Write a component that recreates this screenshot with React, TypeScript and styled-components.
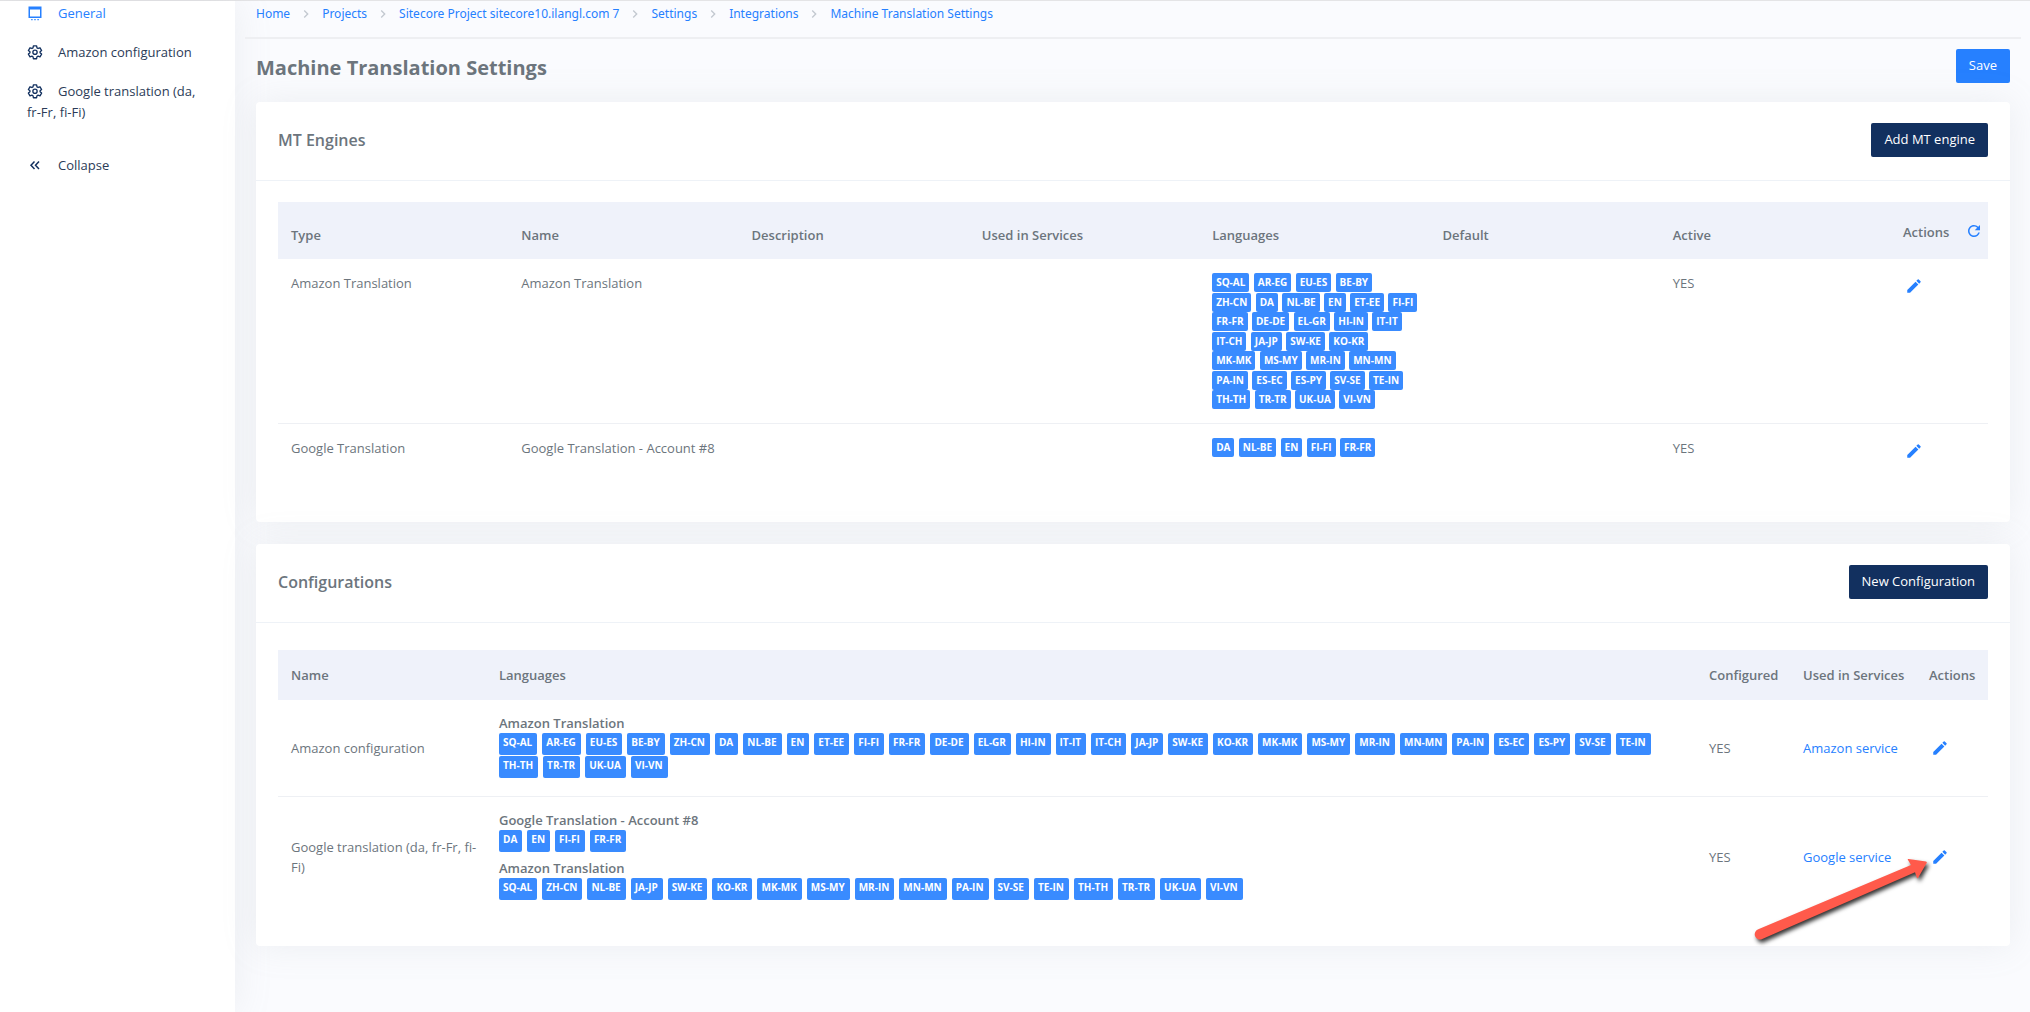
import React from 'react';
import styled, { createGlobalStyle } from 'styled-components';
import { MdEdit, MdRefresh, MdChevronRight } from 'react-icons/md';

const GlobalStyle = createGlobalStyle`
  *, *::before, *::after { box-sizing: border-box; }
  body {
    margin: 0;
    background: #fafbfe;
    color: #6c757d;
    font-family: "Open Sans", "Noto Sans", sans-serif;
    font-size: 13px;
    line-height: 1.5;
  }
  a { color: #2680ff; text-decoration: none; }
  h1, h2, p, ul, ol { margin: 0; padding: 0; }
  ul, ol { list-style: none; }
`;

const Page = styled.div`
  display: grid;
  grid-template-columns: 235px minmax(0, 1fr);
  min-height: 100vh;
  border-top: 1px solid #e4e4e6;
`;

const Sidebar = styled.nav`
  background: #fff;
  box-shadow: 0 0 35px 0 rgba(154, 161, 171, 0.15);
  padding: 2px 27px;
`;

const NavList = styled.ul`
  display: flex;
  flex-direction: column;
  gap: 18px;
`;

const NavItem = styled.li<{ $spaced?: boolean }>`
  margin-top: ${(p) => (p.$spaced ? 14 : 0)}px;
`;

const NavLink = styled.a<{ $active?: boolean }>`
  display: block;
  font-size: 13px;
  line-height: 21px;
  color: ${(p) => (p.$active ? '#2680ff' : '#2b3b57')};

  svg {
    width: 16px;
    height: 16px;
    margin-right: 15px;
    vertical-align: -3px;
    color: ${(p) => (p.$active ? '#2680ff' : '#12305f')};
  }
`;

const CollapseButton = styled(NavLink).attrs({ as: 'button', type: 'button' })`
  border: 0;
  padding: 0;
  background: none;
  font-family: inherit;
  cursor: pointer;
`;

const Main = styled.main`
  padding: 0 9px 24px 10px;
`;

const Crumbs = styled.ol`
  display: flex;
  align-items: center;
  height: 38px;
  padding: 0 11px 10px;
  border-bottom: 2px solid #eeeff2;
  font-family: "Noto Sans", "Open Sans", sans-serif;
  font-size: 12px;
`;

const Crumb = styled.li`
  display: flex;
  align-items: center;

  svg {
    width: 16px;
    height: 16px;
    margin: 0 8px;
    color: #c3c9d0;
  }
`;

const Content = styled.div`
  display: flex;
  flex-direction: column;
  gap: 22px;
  padding: 10px 11px 0;
`;

const TitleBar = styled.div`
  display: flex;
  align-items: flex-start;
  justify-content: space-between;
  height: 31px;
`;

const Title = styled.h1`
  padding-top: 4px;
  font-size: 20px;
  font-weight: 700;
  line-height: 30px;
`;

const Button = styled.button<{ $dark?: boolean }>`
  height: 34px;
  padding: 0 13px;
  border: 0;
  border-radius: 2px;
  background: ${(p) => (p.$dark ? '#12305f' : '#2680ff')};
  color: #fff;
  font: inherit;
  cursor: pointer;
`;

const Card = styled.section`
  background: #fff;
  border-radius: 4px;
  box-shadow: 0 0 35px 0 rgba(154, 161, 171, 0.15);
`;

const CardHead = styled.header`
  display: flex;
  align-items: center;
  justify-content: space-between;
  height: 79px;
  padding: 0 22px 2px;
  border-bottom: 1px solid #eef2f7;
`;

const CardTitle = styled.h2`
  font-size: 16px;
  font-weight: 600;
`;

const CardBody = styled.div<{ $top: number; $bottom: number }>`
  padding: ${(p) => p.$top}px 22px ${(p) => p.$bottom}px;
`;

const Table = styled.table`
  width: 100%;
  border-collapse: collapse;
  table-layout: fixed;
  line-height: 20px;
`;

const Col = styled.col<{ $width?: number }>`
  width: ${(p) => (p.$width ? `${p.$width}px` : 'auto')};
`;

const Th = styled.th<{ $height: number }>`
  height: ${(p) => p.$height}px;
  padding: 0 13px;
  background: #eff2fa;
  text-align: left;
  font-weight: 600;
  white-space: nowrap;
`;

const EngineTh = styled(Th)`
  padding-top: 8px;
`;

const Td = styled.td`
  padding: 14px 4px 13px 13px;
  border-bottom: 1px solid #eef0f4;
  vertical-align: top;

  tr:last-child > & { border-bottom: 0; }
`;

const ConfigTd = styled(Td)`
  padding-top: 16px;
  padding-bottom: 16px;
  vertical-align: middle;
`;

const LanguagesTd = styled(Td)`
  padding-bottom: 18px;
  padding-top: 13px;
`;

const ActionsHead = styled.div`
  display: flex;
  align-items: flex-start;
  justify-content: space-between;
  margin-right: -8px;
  padding-top: 2px;
`;

const IconButton = styled.button`
  display: block;
  padding: 0;
  border: 0;
  background: none;
  color: #2680ff;
  line-height: 0;
  cursor: pointer;

  svg { width: 18px; height: 18px; }
`;

const EditButton = styled(IconButton)`
  margin: 4px 2px;
`;

const TagLine = styled.div`
  line-height: 1.5;
`;

const Tag = styled.span`
  display: inline-block;
  margin-right: 1px;
  padding: 0 4px;
  border-radius: 2px;
  background: #398bff;
  color: #fff;
  font-size: 10px;
  font-weight: 700;
  line-height: 19px;
  vertical-align: top;
`;

const TagGroup = styled.div`
  & + & { margin-top: 6px; }
`;

const GroupName = styled.p`
  font-weight: 600;
  line-height: 20px;
`;

const TagWrap = styled.div`
  display: flex;
  flex-wrap: wrap;
  gap: 1px 5px;
`;

const TallTag = styled(Tag)`
  margin-right: 0;
  padding: 0 5px 4px 4px;
  line-height: 18px;
`;

const Pointed = styled.div`
  position: relative;
`;

const Callout = styled.svg`
  position: absolute;
  right: 70px;
  bottom: 0;
  width: 190px;
  height: 106px;
  pointer-events: none;
  filter: drop-shadow(2px 3px 2px rgba(0, 0, 0, 0.8));
`;

const GearIcon = () => (
  <svg viewBox="0 0 24 24" fill="none" stroke="currentColor" strokeWidth="2" strokeLinejoin="round">
    <path d="M9.6 2.8h4.8l.6 3 1.6.9 2.9-1 2.4 4.1-2.3 2v1.3l2.3 2-2.4 4.1-2.9-1-1.6.9-.6 3H9.6l-.6-3-1.6-.9-2.9 1-2.4-4.1 2.3-2v-1.3l-2.3-2 2.4-4.1 2.9 1 1.6-.9z" />
    <circle cx="12" cy="12.3" r="3.2" />
  </svg>
);

const WindowIcon = () => (
  <svg viewBox="0 0 16 16" fill="currentColor">
    <path d="M1.5 1.5h13V13h-13zM3 4.5v7h10v-7z" fillRule="evenodd" />
    <path d="M4.2 14h1.4v1.2H4.2zM7.3 14h1.4v1.2H7.3zM10.4 14h1.4v1.2h-1.4z" />
  </svg>
);

const CollapseIcon = () => (
  <svg viewBox="0 0 16 16" fill="none" stroke="currentColor" strokeWidth="1.5">
    <path d="M7.5 4.5 4 8.2l3.5 3.7M12 4.5 8.5 8.2l3.5 3.7" />
  </svg>
);

const crumbs = ['Home', 'Projects', 'Sitecore Project sitecore10.ilangl.com 7', 'Settings', 'Integrations', 'Machine Translation Settings'];

const amazonLanguageLines = [
  'SQ-AL AR-EG EU-ES BE-BY',
  'ZH-CN DA NL-BE EN ET-EE FI-FI',
  'FR-FR DE-DE EL-GR HI-IN IT-IT',
  'IT-CH JA-JP SW-KE KO-KR',
  'MK-MK MS-MY MR-IN MN-MN',
  'PA-IN ES-EC ES-PY SV-SE TE-IN',
  'TH-TH TR-TR UK-UA VI-VN',
];

const engines = [
  { type: 'Amazon Translation', name: 'Amazon Translation', lines: amazonLanguageLines },
  { type: 'Google Translation', name: 'Google Translation - Account #8', lines: ['DA NL-BE EN FI-FI FR-FR'] },
];

const configurations = [
  {
    name: 'Amazon configuration',
    service: 'Amazon service',
    groups: [{ name: 'Amazon Translation', languages: amazonLanguageLines.join(' ') }],
  },
  {
    name: 'Google translation (da, fr-Fr, fi-Fi)',
    service: 'Google service',
    groups: [
      { name: 'Google Translation - Account #8', languages: 'DA EN FI-FI FR-FR' },
      {
        name: 'Amazon Translation',
        languages: 'SQ-AL ZH-CN NL-BE JA-JP SW-KE KO-KR MK-MK MS-MY MR-IN MN-MN PA-IN SV-SE TE-IN TH-TH TR-TR UK-UA VI-VN',
      },
    ],
  },
];

function EnginesTable() {
  return (
    <Table>
      <colgroup>
        {Array.from({ length: 7 }, (_, i) => <Col key={i} />)}
        <Col $width={98} />
      </colgroup>
      <thead>
        <tr>
          {['Type', 'Name', 'Description', 'Used in Services', 'Languages', 'Default', 'Active'].map((h) => (
            <EngineTh key={h} $height={57}>{h}</EngineTh>
          ))}
          <Th $height={57}>
            <ActionsHead>
              Actions
              <IconButton type="button" aria-label="Refresh"><MdRefresh /></IconButton>
            </ActionsHead>
          </Th>
        </tr>
      </thead>
      <tbody>
        {engines.map((e) => (
          <tr key={e.type}>
            <Td>{e.type}</Td>
            <Td>{e.name}</Td>
            <Td />
            <Td />
            <Td>
              {e.lines.map((line) => (
                <TagLine key={line}>
                  {line.split(' ').map((l) => <React.Fragment key={l}><Tag>{l}</Tag>{' '}</React.Fragment>)}
                </TagLine>
              ))}
            </Td>
            <Td />
            <Td>YES</Td>
            <Td><EditButton type="button" aria-label={`Edit ${e.name}`}><MdEdit /></EditButton></Td>
          </tr>
        ))}
      </tbody>
    </Table>
  );
}

function ConfigurationsTable() {
  return (
    <Table>
      <colgroup>
        <Col $width={208} />
        <Col />
        <Col $width={94} />
        <Col $width={126} />
        <Col $width={72} />
      </colgroup>
      <thead>
        <tr>
          {['Name', 'Languages', 'Configured', 'Used in Services', 'Actions'].map((h) => (
            <Th key={h} $height={50}>{h}</Th>
          ))}
        </tr>
      </thead>
      <tbody>
        {configurations.map((c) => (
          <tr key={c.name}>
            <ConfigTd>{c.name}</ConfigTd>
            <LanguagesTd>
              {c.groups.map((g) => (
                <TagGroup key={g.name}>
                  <GroupName>{g.name}</GroupName>
                  <TagWrap>{g.languages.split(' ').map((l) => <TallTag key={l}>{l}</TallTag>)}</TagWrap>
                </TagGroup>
              ))}
            </LanguagesTd>
            <ConfigTd>YES</ConfigTd>
            <ConfigTd><a href="#service">{c.service}</a></ConfigTd>
            <ConfigTd><EditButton type="button" aria-label={`Edit ${c.name}`}><MdEdit /></EditButton></ConfigTd>
          </tr>
        ))}
      </tbody>
    </Table>
  );
}

export default function App() {
  return (
    <>
      <GlobalStyle />
      <Page>
        <Sidebar>
          <NavList>
            <NavItem><NavLink href="#general" $active><WindowIcon />General</NavLink></NavItem>
            <NavItem><NavLink href="#amazon"><GearIcon />Amazon configuration</NavLink></NavItem>
            <NavItem><NavLink href="#google"><GearIcon />Google translation (da, fr-Fr, fi-Fi)</NavLink></NavItem>
            <NavItem $spaced><CollapseButton><CollapseIcon />Collapse</CollapseButton></NavItem>
          </NavList>
        </Sidebar>
        <Main>
          <Crumbs>
            {crumbs.map((c, i) => (
              <Crumb key={c}>
                {i > 0 && <MdChevronRight />}
                <a href="#crumb">{c}</a>
              </Crumb>
            ))}
          </Crumbs>
          <Content>
            <TitleBar>
              <Title>Machine Translation Settings</Title>
              <Button type="button">Save</Button>
            </TitleBar>
            <Card>
              <CardHead>
                <CardTitle>MT Engines</CardTitle>
                <Button type="button" $dark>Add MT engine</Button>
              </CardHead>
              <CardBody $top={21} $bottom={45}>
                <EnginesTable />
              </CardBody>
            </Card>
            <Pointed>
              <Card>
                <CardHead>
                  <CardTitle>Configurations</CardTitle>
                  <Button type="button" $dark>New Configuration</Button>
                </CardHead>
                <CardBody $top={27} $bottom={28}>
                  <ConfigurationsTable />
                </CardBody>
              </Card>
              <Callout viewBox="0 0 190 106">
                <path
                  d="M8.3 89.3 161 25l-3.300-5.500q-.2-.7.8-.6L176 21.500q1.300.5.5 1.700L168 38q-.7.8-1.100-.2L165 32.300 11.700 99.300A5.200 5.200 0 0 1 8.300 89.300z"
                  fill="#ff5a4b"
                />
              </Callout>
            </Pointed>
          </Content>
        </Main>
      </Page>
    </>
  );
}
